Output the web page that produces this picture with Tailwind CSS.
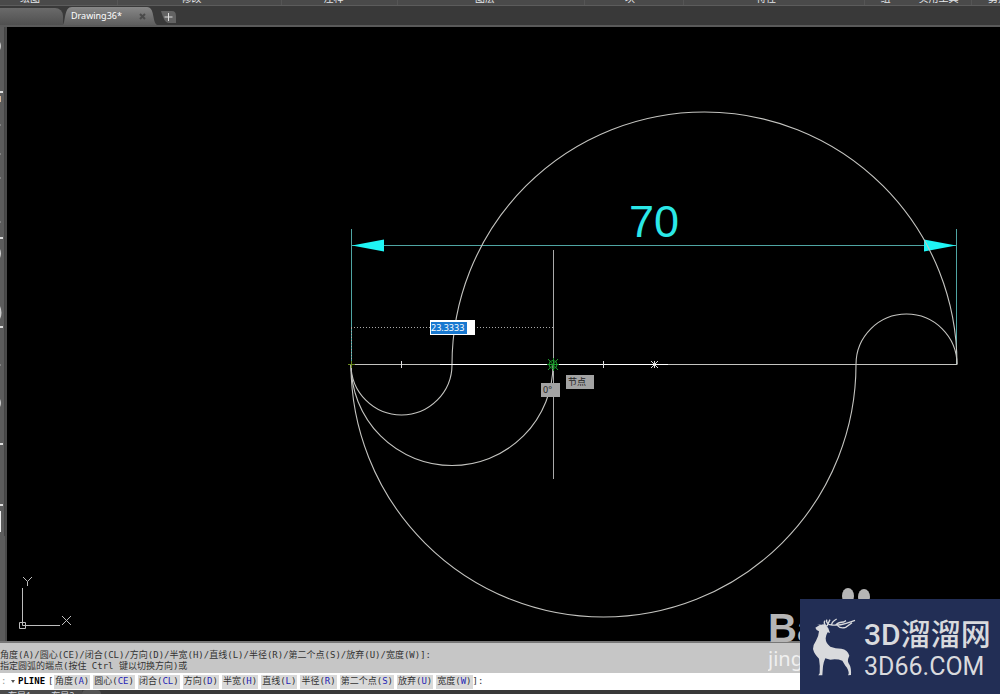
<!DOCTYPE html>
<html lang="zh-CN">
<head>
    <meta charset="UTF-8">
    <meta name="viewport" content="width=device-width, initial-scale=1.0">
    <title>Drawing36</title>
    <script src="https://cdn.jsdelivr.net/npm/@tailwindcss/browser@4"></script>
</head>
<body class="relative h-screen flex flex-col overflow-hidden bg-[#3a3a3a] font-['Noto_Sans','Noto_Sans_CJK_SC',sans-serif]">

    <!-- ribbon panel titles -->
    <header class="h-[6px] shrink-0 grid grid-cols-[118fr_164fr_116fr_187fr_99fr_181fr_41fr_66fr_28fr] content-end overflow-hidden bg-[#4a4a4a] border-b border-[#5c5c5c] text-[10px] leading-[14px] text-center text-gray-200 whitespace-nowrap">
        <span class="min-w-0 pl-5 text-left border-r border-[#555]">绘图</span>
        <span class="min-w-0 pr-4 border-r border-[#555]">修改</span>
        <span class="min-w-0 pr-3 border-r border-[#555]">注释</span>
        <span class="min-w-0 pr-3 border-r border-[#555]">图层</span>
        <span class="min-w-0 pr-2 border-r border-[#555]">块</span>
        <span class="min-w-0 pr-4 border-r border-[#555]">特性</span>
        <span class="min-w-0">组</span>
        <span class="min-w-0 border-r border-[#555]">实用工具</span>
        <span class="min-w-0 pl-4 text-left">剪贴板</span>
    </header>

    <!-- file tabs -->
    <nav class="h-[21px] shrink-0 flex items-end bg-[#393939] border-b-2 border-[#5a5a5a]">
        <div class="h-[17px] w-[63px] rounded-tr-lg bg-linear-to-b from-[#6a6a6a] to-[#505050]"></div>
        <div class="relative h-[18px] w-[94px] pl-2 pr-2 flex items-center justify-between">
            <svg class="absolute inset-0 w-full h-full" viewBox="0 0 94 18" preserveAspectRatio="none">
                <defs>
                    <linearGradient id="tab" x1="0" y1="0" x2="0" y2="1">
                        <stop offset="0" stop-color="#878787"/>
                        <stop offset="1" stop-color="#5e5e5e"/>
                    </linearGradient>
                </defs>
                <path d="M0 18 C3 13 1 0 9 0 H84 C92 0 89 15 94 18 Z" fill="url(#tab)"/>
            </svg>
            <a href="#" class="relative text-[9px] leading-4 text-white">Drawing36*</a>
            <button class="relative w-[10px] h-[7px]" aria-label="关闭">
                <svg class="block" viewBox="0 0 7 7" width="7" height="7"><path d="M1 1L6 6M6 1L1 6" stroke="#4a4a4a" stroke-width="2"/></svg>
            </button>
        </div>
        <button class="h-[14px] w-[18px] mb-px ml-1" aria-label="新建">
            <svg class="block" viewBox="0 0 18 14" width="18" height="14">
                <path d="M0 1 H11 Q15 1 15 6 V13 H7 Q3 12 0 1Z" fill="#636363"/>
                <path d="M7.500 3V11M3.500 7H11.500" stroke="#e0e0e0" stroke-width="1"/>
            </svg>
        </button>
    </nav>

    <main class="flex-1 min-h-0 flex bg-black">
        <!-- edge of the docked palette -->
        <aside class="w-[7px] shrink-0 bg-[#5c5c5c] border-r-2 border-[#4a4a4a] overflow-hidden">
            <svg class="block" viewBox="0 27 5 613" width="5" height="613">
                <path d="M4.5 27V536" stroke="#444"/>
                <path d="M0 92H3M0 238H3M0 327H3M0 444H3M0 505H3" stroke="#ddd" stroke-width="2"/>
                <path d="M0 96H1V102H0Z" fill="#d8b89a"/>
                <path d="M0 125H1M0 154H1M0 178H1M0 222H1M0 365H1" stroke="#aaa"/>
                <path d="M0 42Q2 46 0 50ZM0 249Q2 253 0 258ZM0 306Q3 313 0 319ZM0 399Q2 403 0 407Z" fill="#ccc"/>
                <path d="M0 511H1V532H0Z" fill="#eee"/>
            </svg>
        </aside>

        <!-- model space -->
        <div class="relative flex-1">
            <svg class="absolute left-0 top-0 w-full h-full" viewBox="7 27 993 614" preserveAspectRatio="xMinYMin meet" fill="none">
                <!-- dimension -->
                <g stroke="#4fa5a3">
                    <path d="M351.5 229V364M956.5 229V364"/>
                    <path d="M352 245.5H956"/>
                </g>
                <path d="M352 245.500L384 239.500V251.500ZM956 245.500L924 239.500V251.500Z" fill="#1ff5f5"/>
                <text x="629" y="237" font-family="Liberation Sans, sans-serif" font-size="45" fill="#2be8e8">70</text>

                <!-- arcs -->
                <g stroke="#c4c4c0" stroke-width="1.1">
                    <path d="M452 364.500A252.500 252.500 0 0 1 957 364.500"/>
                    <path d="M351 364.500A252.500 252.500 0 0 0 856 364.500"/>
                    <path d="M351 364.500A101 101 0 0 0 553 364.500"/>
                    <path d="M351 364.500A50.500 50.500 0 0 0 452 364.500"/>
                    <path d="M856 364.500A50.500 50.500 0 0 1 957 364.500"/>
                </g>
                <path d="M351 364.500H957" stroke="#c4c4c0"/>

                <!-- crosshair -->
                <path d="M440 364.500H668" stroke="#fff"/>
                <path d="M553.500 250V479" stroke="#aaa"/>
                <path d="M351 327.500H553M351.500 328V364" stroke="#aaa" stroke-dasharray="1 2"/>

                <!-- nodes on the diameter -->
                <path d="M401.500 361V368M603.500 361V368" stroke="#ddd"/>
                <path d="M654.500 361V368M651 361L658 368M658 361L651 368" stroke="#ddd"/>
                <path d="M348 364.500H355M351.500 361V368" stroke="#6b8a20"/>
                <g stroke="#1c9a2c">
                    <circle cx="553" cy="364.500" r="4"/>
                    <path d="M548 359L558 370M558 359L548 370M547 364.500H559M553.500 358V371"/>
                </g>

                <!-- ucs icon -->
                <g stroke="#bdbdbd">
                    <path d="M19.500 622.500H25.500V628.500H19.500ZM22.500 588V625.500H60"/>
                    <path d="M23 577L27.500 581.500L32 577M27.500 581.500V586M62 616L71 625M71 616L62 625"/>
                </g>
            </svg>

            <!-- dynamic input -->
            <label class="absolute left-[423px] top-[293px] w-[45px] h-[15px] p-px flex items-center bg-white">
                <input type="text" value="23.3333" aria-label="长度" class="block w-[36px] h-[12px] bg-[#1878d0] text-[9px] leading-3 text-white outline-none">
            </label>
            <output class="absolute left-[534px] top-[356px] w-[19px] h-[14px] pl-[2px] bg-[#a3a3a3] text-[9px] leading-[14px] text-[#222]">0°</output>
            <span class="absolute left-[559px] top-[348px] w-[28px] h-[14px] pl-[2px] bg-[#a3a3a3] text-[9px] leading-[14px] text-[#222]">节点</span>
        </div>
    </main>

    <!-- command line -->
    <section class="shrink-0 border-t-2 border-[#777] bg-[#c6c6c6] font-['DejaVu_Sans_Mono','Noto_Sans_CJK_SC',monospace] text-[9px] leading-[11px] text-[#333] whitespace-nowrap overflow-hidden">
        <div class="h-[30px] pt-[7px]">
            <p>角度(A)/圆心(CE)/闭合(CL)/方向(D)/半宽(H)/直线(L)/半径(R)/第二个点(S)/放弃(U)/宽度(W)]:</p>
            <p>指定圆弧的端点(按住 Ctrl 键以切换方向)或</p>
        </div>
        <div class="h-[17px] flex items-center bg-white">
            <span class="w-2 pl-px text-[#999]">:</span>
            <button class="w-[10px] flex justify-center" aria-label="最近的命令">
                <svg viewBox="0 0 4 3" width="4" height="3"><path d="M0 0H4L2 3Z" fill="#555"/></svg>
            </button>
            <b class="w-[30px] text-black">PLINE</b>
            <span class="w-[6px]">[</span>
            <div class="flex gap-[3px]">
                <button class="h-[14px] px-px bg-[#d9d9d9]">角度(<span class="text-[#2525b5]">A</span>)</button>
                <button class="h-[14px] px-px bg-[#d9d9d9]">圆心(<span class="text-[#2525b5]">CE</span>)</button>
                <button class="h-[14px] px-px bg-[#d9d9d9]">闭合(<span class="text-[#2525b5]">CL</span>)</button>
                <button class="h-[14px] px-px bg-[#d9d9d9]">方向(<span class="text-[#2525b5]">D</span>)</button>
                <button class="h-[14px] px-px bg-[#d9d9d9]">半宽(<span class="text-[#2525b5]">H</span>)</button>
                <button class="h-[14px] px-px bg-[#d9d9d9]">直线(<span class="text-[#2525b5]">L</span>)</button>
                <button class="h-[14px] px-px bg-[#d9d9d9]">半径(<span class="text-[#2525b5]">R</span>)</button>
                <button class="h-[14px] px-px bg-[#d9d9d9]">第二个点(<span class="text-[#2525b5]">S</span>)</button>
                <button class="h-[14px] px-px bg-[#d9d9d9]">放弃(<span class="text-[#2525b5]">U</span>)</button>
                <button class="h-[14px] px-px bg-[#d9d9d9]">宽度(<span class="text-[#2525b5]">W</span>)</button>
            </div>
            <span>]:</span>
        </div>
    </section>

    <!-- layout tabs, cut off by the window edge -->
    <footer class="h-[4px] shrink-0 flex overflow-hidden bg-[#393939] text-[9px] leading-3 text-gray-300">
        <div class="w-[82px] pl-2 flex gap-5 bg-[#4a4a4a]"><span>布局1</span><span>布局2</span></div>
        <div class="w-[19px] rounded-t-md bg-[#555]"></div>
    </footer>

    <!-- watermarks -->
    <div class="absolute right-0 bottom-0 w-[232px] h-[108px] overflow-hidden font-['Liberation_Sans',sans-serif]">
        <svg class="absolute left-[73px] top-0" viewBox="0 0 32 22" width="32" height="22" fill="#b5b5b5">
            <ellipse cx="7" cy="10" rx="6" ry="8"/>
            <ellipse cx="23" cy="11" rx="6" ry="8"/>
        </svg>
        <p class="absolute left-0 top-[24px] text-[40px] leading-[36px] font-bold text-[#b5b5b5]">Bai</p>
        <p class="absolute left-0 top-[60px] font-['Noto_Sans',sans-serif] text-[20px] leading-[26px] text-[#f0f0f0]">jingyan</p>
        <div class="absolute right-0 bottom-0 w-[200px] h-[95px] flex items-center gap-[7px] pl-3 bg-[#222e55] text-[#d9dadd]">
            <svg class="shrink-0" viewBox="215 140 135 180" width="45" height="60" fill="currentColor">
                <path d="M225 172L238 164L230 162L243 163Q250 160 257 165L264 174L269 188L262 186Q257 194 256 204Q256 219 270 229Q285 235 303 235Q322 238 327 256L324 264Q320 274 328 284Q333 293 332 314L323 315L325 310Q325 296 315 286L306 271Q290 265 270 268L255 264Q250 274 248 288L246 315H234L238 309Q240 288 236 265Q222 252 218 236Q218 223 227 211Q235 198 236 183Q228 181 225 172Z"/>
                <path d="M258 168Q248 158 254 151M260 168Q264 158 269 148M264 161Q257 156 259 148M265 162Q290 168 315 160Q333 154 344 150M274 162Q275 154 289 146M286 164Q295 155 310 155L317 151M291 165Q300 176 316 171L335 157" fill="none" stroke="currentColor" stroke-width="4"/>
            </svg>
            <div class="pt-1 whitespace-nowrap">
                <p class="font-['Roboto','Noto_Sans_CJK_SC',sans-serif] text-[30px] leading-[36px] font-medium">3D溜溜网</p>
                <p class="font-['Roboto',sans-serif] text-[25px] leading-[28px]">3D66.COM</p>
            </div>
        </div>
    </div>
</body>
</html>
